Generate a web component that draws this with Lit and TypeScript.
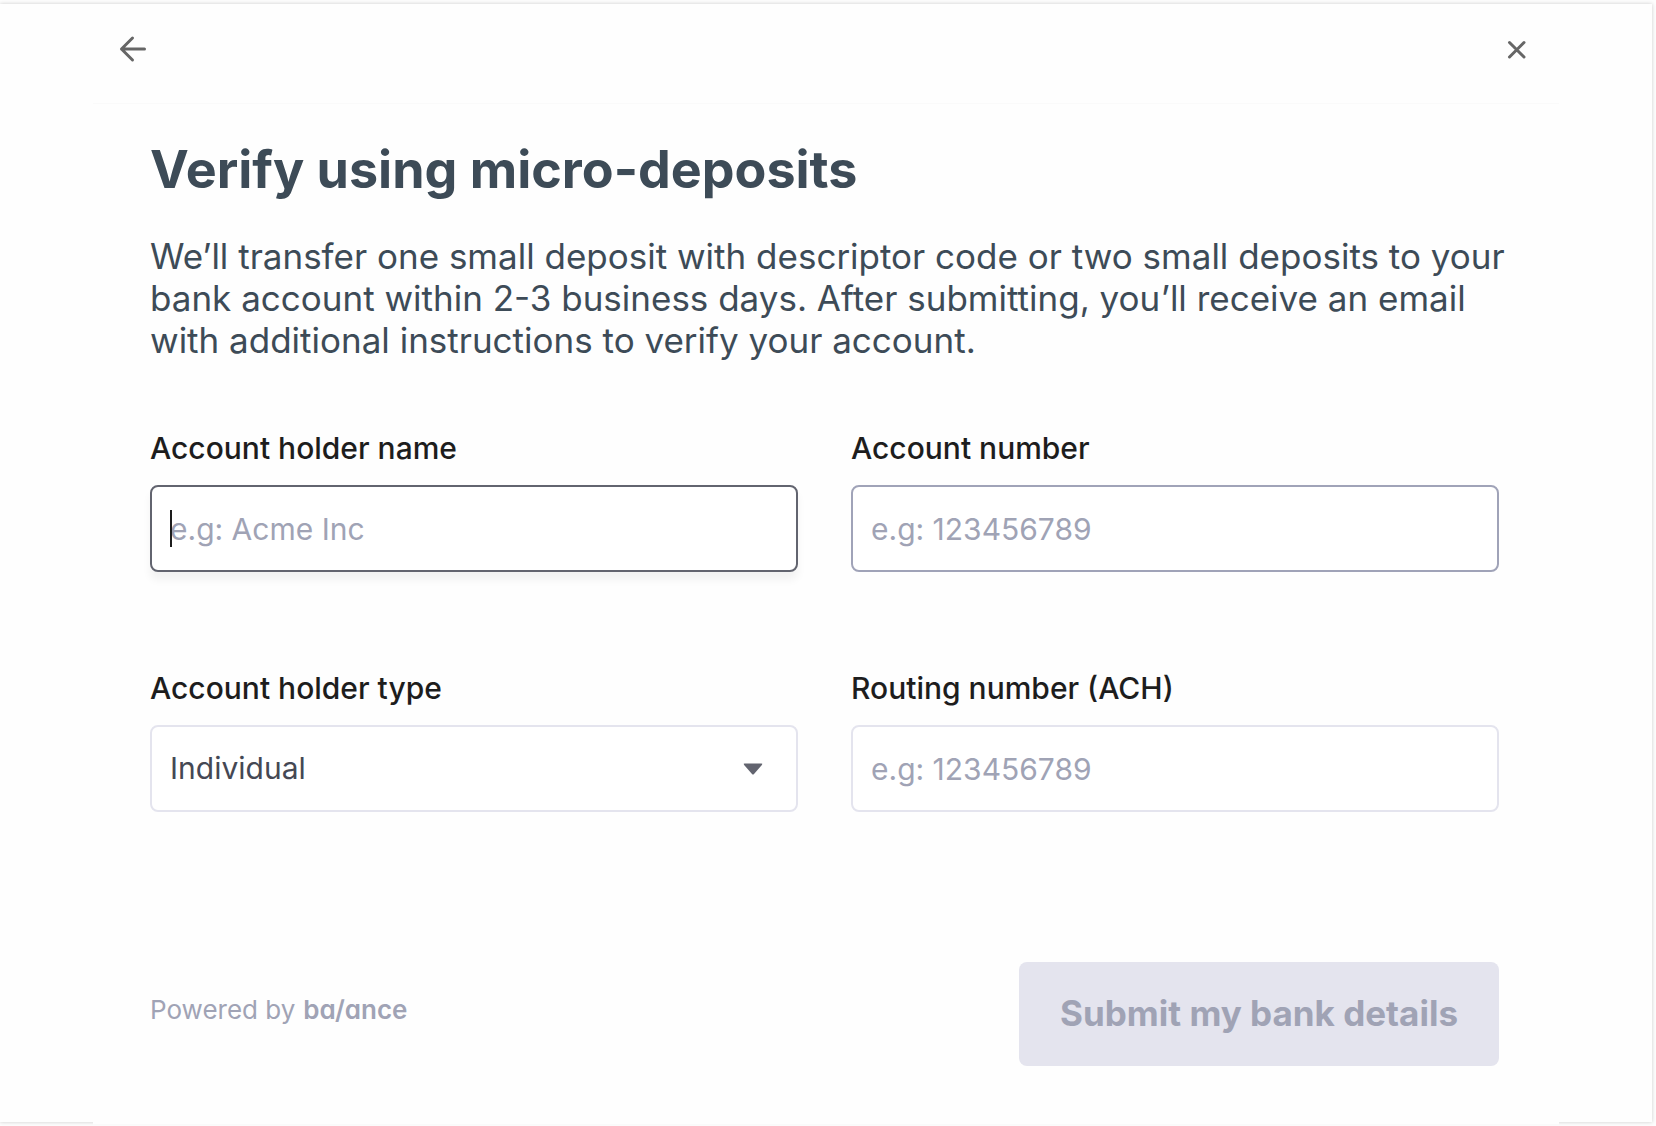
import { LitElement, html, css } from "lit";
import { customElement, property, state } from "lit/decorators.js";

@customElement("text-field")
class TextField extends LitElement {
  @property() label = "";
  @property() placeholder = "";
  @property() tone = "";

  static styles = css`
    :host {
      display: block;
      min-width: 0;
    }
    .label {
      display: block;
      margin-bottom: 19px;
      font-size: 30px;
      line-height: 36px;
      font-weight: 500;
      color: #1d1d1d;
    }
    .wrap {
      position: relative;
      display: flex;
    }
    .input {
      box-sizing: border-box;
      width: 100%;
      height: 87px;
      margin: 0;
      padding: 0 18px;
      border: 2px solid #e4e4ee;
      border-radius: 8px;
      background: #fff;
      font: 400 30px/36px Inter, "Liberation Sans", sans-serif;
      color: #3d404d;
      outline: none;
    }
    .input::placeholder {
      color: #a0a3b5;
      opacity: 1;
    }
    .hover {
      border-color: #a0a3b8;
    }
    .active {
      border-color: #62646f;
      box-shadow: 0 8px 8px rgba(0, 0, 0, 0.05);
      caret-color: transparent;
    }
    .caret {
      position: absolute;
      left: 20px;
      top: 25px;
      width: 2px;
      height: 37px;
      background: #1d1d1d;
      pointer-events: none;
    }
  `;

  render() {
    return html`
      <label class="label" for="field">${this.label}</label>
      <div class="wrap">
        <input id="field" class="input ${this.tone}" type="text" placeholder=${this.placeholder} />
        ${this.tone === "active" ? html`<span class="caret"></span>` : null}
      </div>
    `;
  }
}

@customElement("select-field")
class SelectField extends LitElement {
  @property() label = "";
  @property({ attribute: false }) options: string[] = [];

  static styles = css`
    :host {
      display: block;
      min-width: 0;
    }
    .label {
      display: block;
      margin-bottom: 19px;
      font-size: 30px;
      line-height: 36px;
      font-weight: 500;
      color: #1d1d1d;
    }
    .wrap {
      position: relative;
      display: flex;
    }
    .select {
      box-sizing: border-box;
      width: 100%;
      height: 87px;
      margin: 0;
      padding: 0 64px 2px 18px;
      border: 2px solid #e4e4ee;
      border-radius: 8px;
      background: #fff;
      font: 400 30px/36px Inter, "Liberation Sans", sans-serif;
      color: #454854;
      appearance: none;
      outline: none;
    }
    .arrow {
      position: absolute;
      right: 35px;
      top: 38px;
      width: 20px;
      height: 12px;
      pointer-events: none;
    }
  `;

  render() {
    return html`
      <label class="label" for="field">${this.label}</label>
      <div class="wrap">
        <select id="field" class="select">
          ${this.options.map((o) => html`<option>${o}</option>`)}
        </select>
        <svg class="arrow" viewBox="0 0 20 12" aria-hidden="true">
          <path d="M1.6 0.6H18.4Q20 0.6 18.9 1.9L11 10.9Q10 12 9 10.9L1.1 1.9Q0 0.6 1.6 0.6Z" fill="#62646f" />
        </svg>
      </div>
    `;
  }
}

@customElement("app-root")
class AppRoot extends LitElement {
  @state() private holderTypes = ["Individual", "Business"];

  static styles = css`
    :host {
      display: block;
      box-sizing: border-box;
      min-height: 100vh;
      padding: 4px 4px 4px 0;
      background: #fdfdfd;
      font-family: Inter, "Liberation Sans", sans-serif;
      overflow: hidden;
    }
    .card {
      box-sizing: border-box;
      display: flex;
      min-height: calc(100vh - 8px);
      padding: 0 93px;
      background: #fefefe;
      box-shadow: 0 0 4px rgba(0, 0, 0, 0.2);
    }
    .panel {
      flex: 1;
      min-width: 0;
      display: flex;
      flex-direction: column;
      margin-bottom: -3px;
      background: #fefefe;
      border-bottom: 1px solid #fafafa;
    }
    .header {
      display: flex;
      justify-content: space-between;
      align-items: center;
      box-sizing: border-box;
      height: 100px;
      padding: 0 25px 9px 20px;
      border-bottom: 1px solid #fafafa;
    }
    .icon-button {
      display: flex;
      padding: 0;
      border: 0;
      background: none;
      color: #666;
      cursor: pointer;
    }
    .content {
      padding: 34px 60px 52px 57px;
    }
    .title {
      margin: 0 0 33px;
      font-size: 52px;
      line-height: 64px;
      font-weight: 700;
      color: #3d4b57;
    }
    .lead {
      margin: 0 -20px 69px 0;
      font-size: 35px;
      line-height: 42px;
      color: #3d4b57;
    }
    .grid {
      display: grid;
      grid-template-columns: 1fr 1fr;
      gap: 98px 53px;
    }
    .footer {
      display: flex;
      justify-content: space-between;
      align-items: center;
      margin-top: 150px;
    }
    .powered {
      display: flex;
      align-items: baseline;
      gap: 8px;
      margin: 0 0 8px;
      font-size: 26px;
      line-height: 32px;
      color: #a0a3b5;
    }
    .brand {
      font-weight: 600;
      font-feature-settings: "cv11";
    }
    .submit {
      height: 104px;
      padding: 0 41px 2px;
      border: 0;
      border-radius: 8px;
      background: #e4e4ee;
      font: 700 35px/44px Inter, "Liberation Sans", sans-serif;
      color: #a0a3b5;
    }
  `;

  render() {
    return html`
      <main class="card">
        <div class="panel">
          <header class="header">
            <button class="icon-button" aria-label="Back">
              <svg width="40" height="40" viewBox="0 0 40 40" fill="none" stroke="currentColor" stroke-width="3" stroke-linecap="round" stroke-linejoin="round">
                <path d="M31.5 20H8.5M19.5 9L8.5 20L19.5 31" />
              </svg>
            </button>
            <button class="icon-button" aria-label="Close">
              <svg width="34" height="34" viewBox="0 0 34 34" fill="none" stroke="currentColor" stroke-width="3" stroke-linecap="round">
                <path d="M9.5 10.5L24 25M24 10.5L9.5 25" />
              </svg>
            </button>
          </header>
          <form class="content" @submit=${(e: Event) => e.preventDefault()}>
            <h1 class="title">Verify using micro-deposits</h1>
            <p class="lead">
              We’ll transfer one small deposit with descriptor code or two small deposits to your bank account within
              2-3 business days. After submitting, you’ll receive an email with additional instructions to verify your
              account.
            </p>
            <div class="grid">
              <text-field label="Account holder name" placeholder="e.g: Acme Inc" tone="active"></text-field>
              <text-field label="Account number" placeholder="e.g: 123456789" tone="hover"></text-field>
              <select-field label="Account holder type" .options=${this.holderTypes}></select-field>
              <text-field label="Routing number (ACH)" placeholder="e.g: 123456789"></text-field>
            </div>
            <div class="footer">
              <p class="powered"><span>Powered by</span><span class="brand">ba/ance</span></p>
              <button class="submit" type="submit" disabled>Submit my bank details</button>
            </div>
          </form>
        </div>
      </main>
    `;
  }
}
